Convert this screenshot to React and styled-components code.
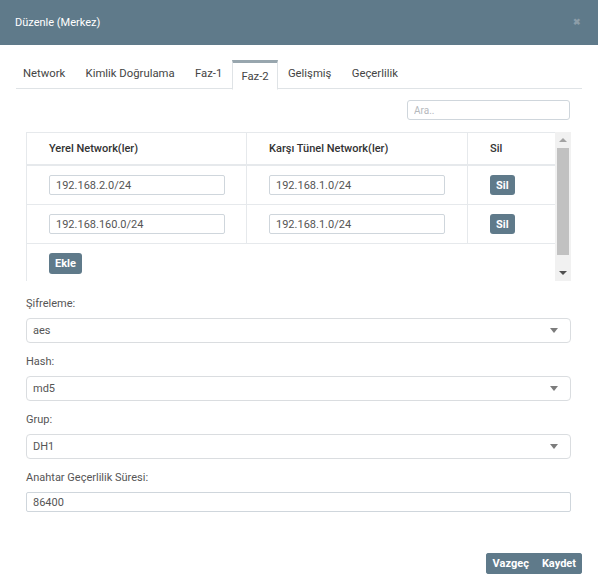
import React from 'react';
import styled, { createGlobalStyle } from 'styled-components';

const Global = createGlobalStyle`
  html, body { margin: 0; padding: 0; background: #fff; }
  body { font-family: Roboto, "Liberation Sans", Arial, sans-serif; font-size: 11px; color: #444; }
  * { box-sizing: border-box; }
`;

const Dialog = styled.div`
  width: 598px;
  height: 587px;
  display: flex;
  flex-direction: column;
  background: #fff;
`;

const Header = styled.div`
  height: 45px;
  flex: none;
  background: #5f7a8a;
  display: flex;
  align-items: center;
  justify-content: space-between;
  padding: 0 17px 0 15px;
  color: #fff;
  font-size: 11px;
`;

const Close = styled.span`
  color: #8c9da8;
  font-size: 9px;
  font-weight: bold;
  line-height: 1;
`;

const TabList = styled.div`
  display: flex;
  margin: 15px 16px 0;
  border-bottom: 1px solid #dfe3e6;
  height: 29px;
`;

const Tab = styled.div`
  height: 29px;
  padding: 0 10.2px 3px;
  display: flex;
  align-items: center;
  color: #444;
  font-size: 11.3px;
  &:first-child { padding-left: 7px; }
  ${p => p.$active && `
    background: #fff;
    border: 1px solid #dfe3e6;
    border-top: 3px solid #98a6ae;
    border-bottom-color: #fff;
    height: 30px;
    padding: 1px 8px 0;
  `}
`;

const Content = styled.div`
  padding: 11px 27px 0 26px;
  display: flex;
  flex-direction: column;
`;

const SearchRow = styled.div`
  display: flex;
  justify-content: flex-end;
`;

const SearchInput = styled.input`
  width: 163px;
  height: 20px;
  border: 1px solid #cfd6dc;
  border-radius: 3px;
  padding: 0 6px;
  font-family: inherit;
  font-size: 10px;
  color: #555;
  margin-right: 1px;
  &::placeholder { color: #b5b9bd; }
`;

const TableWrap = styled.div`
  display: flex;
  margin-top: 12px;
  height: 149px;
`;

const Table = styled.div`
  flex: 1;
  display: grid;
  grid-template-columns: 220px 221px 1fr;
  grid-template-rows: 33px 39px 39px 38px;
  border-left: 1px solid #e6e9ec;
  border-top: 1px solid #e6e9ec;
`;

const HeadCell = styled.div`
  display: flex;
  align-items: center;
  padding-left: 22px;
  font-weight: 500;
  color: #333;
  font-size: 11px;
  border-bottom: 2px solid #e6e9ec;
  border-right: ${p => (p.$last ? 'none' : '1px solid #e6e9ec')};
`;

const Cell = styled.div`
  display: flex;
  align-items: center;
  padding-left: 22px;
  border-bottom: 1px solid #e6e9ec;
  border-right: ${p => (p.$last ? 'none' : '1px solid #e6e9ec')};
`;

const FooterCell = styled.div`
  grid-column: 1 / -1;
  display: flex;
  align-items: center;
  padding-left: 22px;
`;

const CellInput = styled.input`
  width: 176px;
  height: 20px;
  border: 1px solid #cfd6dc;
  border-radius: 2px;
  padding: 0 6px;
  font-family: inherit;
  font-size: 11px;
  color: #555;
`;

const Btn = styled.button`
  background: #5f7a8a;
  color: #fff;
  border: none;
  border-radius: 3px;
  font-family: inherit;
  font-weight: 700;
  font-size: 11px;
  height: ${p => p.$h || 20}px;
  padding: 0 ${p => p.$px || 6}px;
  cursor: pointer;
`;

const Scrollbar = styled.div`
  width: 16px;
  flex: none;
  background: #f1f1f1;
  display: flex;
  flex-direction: column;
  align-items: center;
`;

const Arrow = styled.div`
  height: 16px;
  width: 16px;
  display: flex;
  align-items: center;
  justify-content: center;
  &::after {
    content: '';
    border-left: 4px solid transparent;
    border-right: 4px solid transparent;
    ${p => (p.$up ? 'border-bottom: 4px solid #a3a3a3;' : 'border-top: 4px solid #505050;')}
  }
`;

const Thumb = styled.div`
  width: 12px;
  height: 107px;
  background: #c1c1c1;
`;

const Spacer = styled.div`
  flex: 1;
`;

const Label = styled.div`
  font-size: 11px;
  color: #555;
  line-height: 15px;
  margin: ${p => (p.$first ? 15 : 11)}px 0 7px;
`;

const Select = styled.div`
  height: 25px;
  border: 1px solid #dadde0;
  border-radius: 4px;
  display: flex;
  align-items: center;
  justify-content: space-between;
  padding: 0 12px 0 6px;
  color: #555;
  font-size: 11px;
  &::after {
    content: '';
    border-left: 4px solid transparent;
    border-right: 4px solid transparent;
    border-top: 5px solid #7c7c7c;
  }
`;

const TextInput = styled.input`
  height: 20px;
  border: 1px solid #cfd6dc;
  border-radius: 2px;
  padding: 0 6px;
  font-family: inherit;
  font-size: 11px;
  color: #555;
`;

const Footer = styled.div`
  margin-top: auto;
  display: flex;
  justify-content: flex-end;
  padding: 0 16px 13px 0;
`;

const BtnGroup = styled.div`
  display: flex;
  background: #5f7a8a;
  border-radius: 3px;
`;

const rows = [
  ['192.168.2.0/24', '192.168.1.0/24'],
  ['192.168.160.0/24', '192.168.1.0/24'],
];

const tabs = ['Network', 'Kimlik Doğrulama', 'Faz-1', 'Faz-2', 'Gelişmiş', 'Geçerlilik'];

export default function App() {
  return (
    <>
      <Global />
      <Dialog>
        <Header>
          <span>Düzenle (Merkez)</span>
          <Close>✖</Close>
        </Header>
        <TabList>
          {tabs.map(t => (
            <Tab key={t} $active={t === 'Faz-2'}>{t}</Tab>
          ))}
        </TabList>
        <Content>
          <SearchRow>
            <SearchInput placeholder="Ara.." />
          </SearchRow>
          <TableWrap>
            <Table>
              <HeadCell>Yerel Network(ler)</HeadCell>
              <HeadCell>Karşı Tünel Network(ler)</HeadCell>
              <HeadCell $last>Sil</HeadCell>
              {rows.map((r, i) => (
                <React.Fragment key={i}>
                  <Cell><CellInput defaultValue={r[0]} /></Cell>
                  <Cell><CellInput defaultValue={r[1]} /></Cell>
                  <Cell $last><Btn $px={6}>Sil</Btn></Cell>
                </React.Fragment>
              ))}
              <FooterCell><Btn $h={21} $px={6}>Ekle</Btn></FooterCell>
            </Table>
            <Scrollbar>
              <Arrow $up />
              <Thumb />
              <Spacer />
              <Arrow />
            </Scrollbar>
          </TableWrap>
          <Label $first>Şifreleme:</Label>
          <Select>aes</Select>
          <Label>Hash:</Label>
          <Select>md5</Select>
          <Label>Grup:</Label>
          <Select>DH1</Select>
          <Label>Anahtar Geçerlilik Süresi:</Label>
          <TextInput defaultValue="86400" />
        </Content>
        <Footer>
          <BtnGroup>
            <Btn $h={21} $px={7}>Vazgeç</Btn>
            <Btn $h={21} $px={6}>Kaydet</Btn>
          </BtnGroup>
        </Footer>
      </Dialog>
    </>
  );
}
